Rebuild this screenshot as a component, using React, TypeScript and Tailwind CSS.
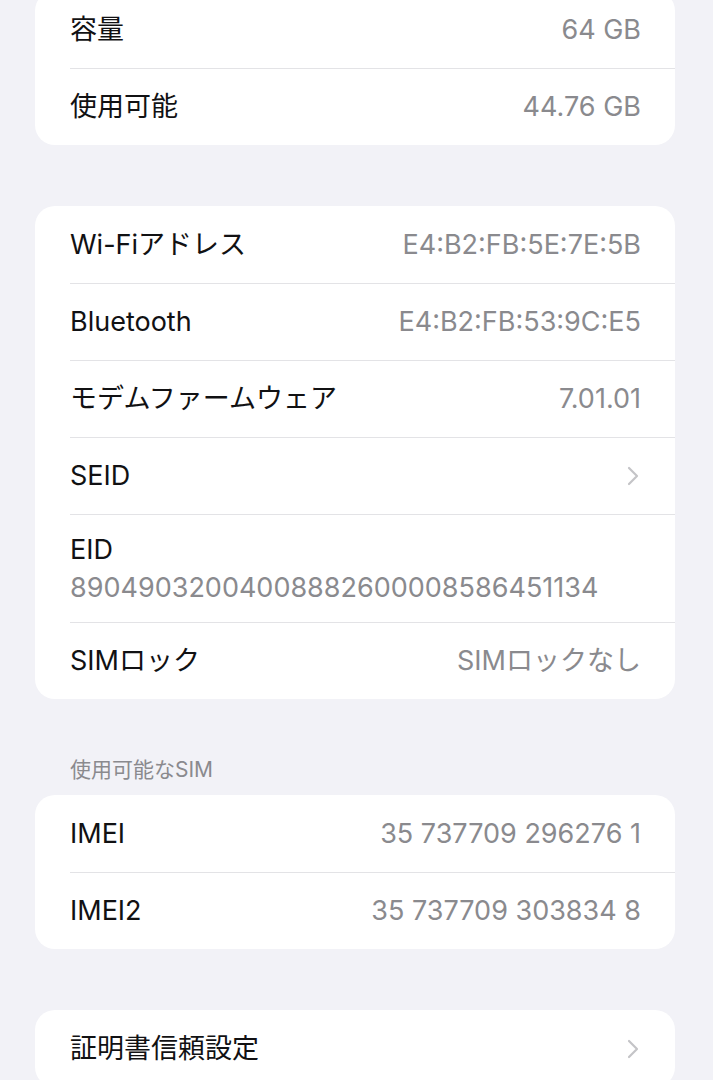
import React from "react";

type Row = {
  label: string;
  value?: string;
  chevron?: boolean;
  sub?: string;
};

const font = { fontFamily: '"Inter", "Noto Sans CJK JP", sans-serif' };

const Chevron = () => (
  <svg width="12" height="20" viewBox="0 0 12 20" fill="none">
    <path d="M2 2l8 8-8 8" stroke="#c4c4c7" strokeWidth="2.2" strokeLinecap="round" strokeLinejoin="round" />
  </svg>
);

const Card = ({ rows, className = "" }: { rows: Row[]; className?: string }) => (
  <div className={`ml-[35px] mr-[38px] bg-white rounded-[20px] overflow-hidden ${className}`}>
    {rows.map((row, i) => (
      <div key={i} className="pl-[35px]">
        <div className={`pr-[34px] border-t ${i > 0 ? "border-[#e3e3e6]" : "border-transparent"}`}>
          {row.sub ? (
            <div className="h-[107px] flex flex-col justify-center">
              <p className="text-[27px] text-[#111113] leading-[36px]">{row.label}</p>
              <p className="text-[27px] text-[#8a8a8e] leading-[36px] mt-[2px]">{row.sub}</p>
            </div>
          ) : (
            <div className="h-[76px] flex items-center justify-between">
              <p className="text-[27px] text-[#111113]">{row.label}</p>
              {row.value && <p className="text-[27px] text-[#8a8a8e]">{row.value}</p>}
              {row.chevron && (
                <span className="pr-[2px]">
                  <Chevron />
                </span>
              )}
            </div>
          )}
        </div>
      </div>
    ))}
  </div>
);

export default function App() {
  return (
    <div className="w-[713px] h-[1080px] bg-[#f2f2f7] overflow-hidden" style={font}>
      <Card
        className="-mt-[9px]"
        rows={[
          { label: "容量", value: "64 GB" },
          { label: "使用可能", value: "44.76 GB" },
        ]}
      />
      <Card
        className="mt-[61px]"
        rows={[
          { label: "Wi-Fiアドレス", value: "E4:B2:FB:5E:7E:5B" },
          { label: "Bluetooth", value: "E4:B2:FB:53:9C:E5" },
          { label: "モデムファームウェア", value: "7.01.01" },
          { label: "SEID", chevron: true },
          { label: "EID", sub: "89049032004008882600008586451134" },
          { label: "SIMロック", value: "SIMロックなし" },
        ]}
      />
      <p className="mt-[57px] ml-[70px] text-[21px] text-[#8a8a8e] leading-[28px]">使用可能なSIM</p>
      <Card
        className="mt-[11px]"
        rows={[
          { label: "IMEI", value: "35 737709 296276 1" },
          { label: "IMEI2", value: "35 737709 303834 8" },
        ]}
      />
      <Card className="mt-[61px]" rows={[{ label: "証明書信頼設定", chevron: true }]} />
    </div>
  );
}
